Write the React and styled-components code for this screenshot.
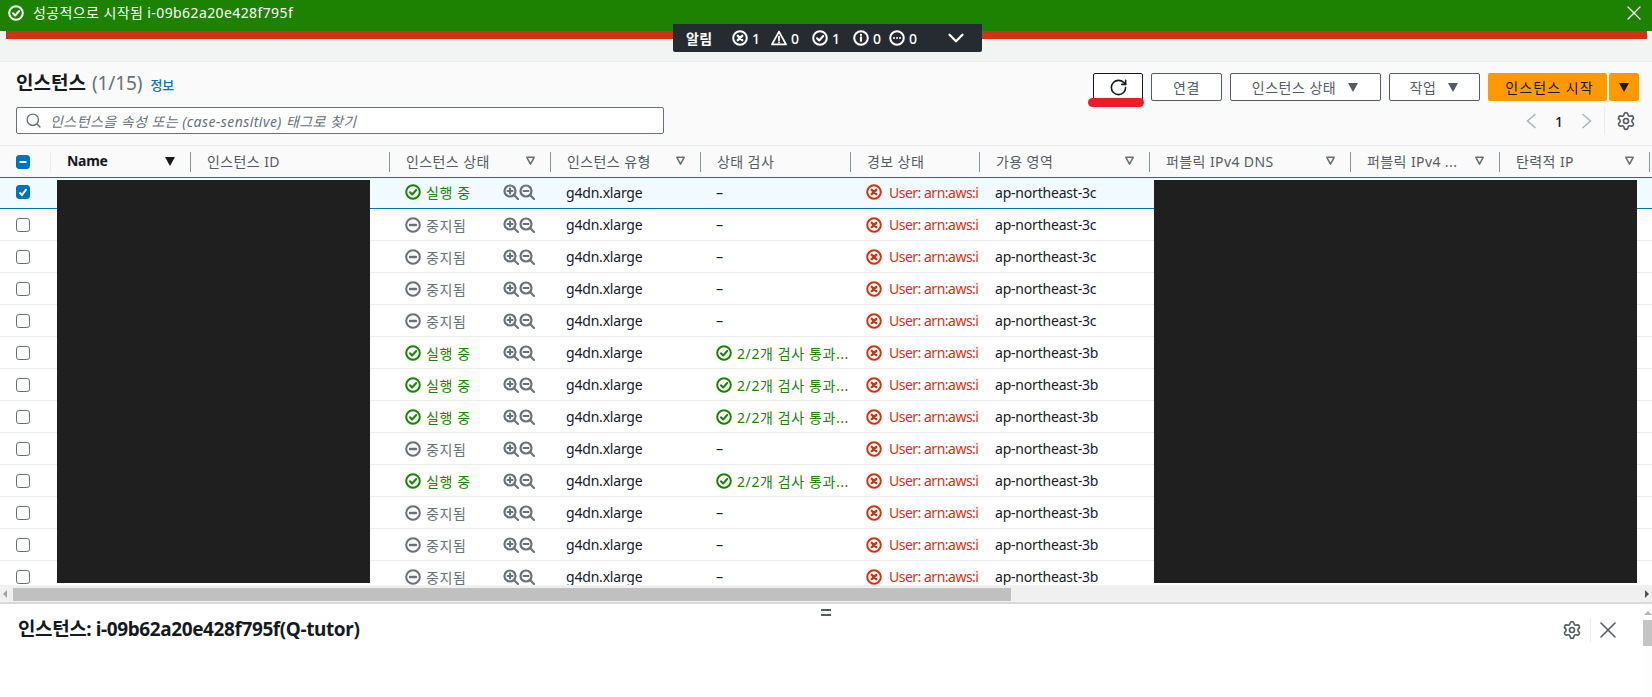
import React from 'react';
import styled, { createGlobalStyle } from 'styled-components';
import { RotateCw, Settings, X, ChevronDown, Search } from 'lucide-react';

const GlobalStyle = createGlobalStyle`
  html, body {
    margin: 0;
    padding: 0;
    height: 697px;
    overflow: hidden;
    background: #f2f3f3;
    font-family: "Noto Sans", "Noto Sans CJK KR", sans-serif;
    font-size: 14px;
    color: #16191f;
  }
`;

const COLUMNS = '50px 140px 199px 161px 150px 150px 129px 170px 201px 149px 150px 3px';

const Page = styled.div`
  position: relative;
  width: 1652px;
  height: 697px;
  overflow: hidden;
  display: flex;
  flex-direction: column;
`;

const FlashGreen = styled.div`
  height: 31px;
  background: #1d8102;
  color: #fff;
  display: flex;
  align-items: center;
  justify-content: space-between;
  padding: 0 6px 5px 8px;
  box-sizing: border-box;
  line-height: 18px;
`;

const FlashText = styled.div`
  display: flex;
  align-items: center;
  gap: 9px;
  letter-spacing: 0.4px;
`;

const FlashRed = styled.div`
  height: 8px;
  margin: 0 5px 0 6px;
  background: #d13212;
`;

const Gap = styled.div`
  height: 22px;
  background: #f2f3f3;
  border-bottom: 1px solid #eaeded;
`;

const NotifyBar = styled.div`
  position: absolute;
  left: 673px;
  top: 24px;
  width: 309px;
  height: 28px;
  background: #262b32;
  border-radius: 0 0 2px 2px;
  color: #fff;
  display: flex;
  align-items: center;
  padding-left: 13px;
  box-sizing: border-box;
  font-size: 14px;
  font-weight: 500;
`;

const NotifyTitle = styled.span`
  font-weight: 700;
  width: 46px;
  letter-spacing: 0.3px;
`;

const NotifyItem = styled.span`
  display: flex;
  align-items: center;
  gap: 4px;
  width: ${(p) => p.$w}px;
`;

const Header = styled.div`
  height: 83px;
  background: #fafafa;
  display: flex;
  justify-content: space-between;
  padding: 8px 13px 0 16px;
  box-sizing: border-box;
`;

const HeaderLeft = styled.div`
  display: flex;
  flex-direction: column;
  gap: 11px;
`;

const TitleLine = styled.div`
  display: flex;
  align-items: baseline;
  height: 26px;
  line-height: 26px;
`;

const Title = styled.h1`
  margin: 0;
  font-size: 19px;
  font-weight: 700;
`;

const Count = styled.span`
  font-size: 19px;
  color: #687078;
  margin-left: 6px;
  letter-spacing: -0.1px;
`;

const InfoLink = styled.a`
  font-size: 13px;
  font-weight: 500;
  color: #0073bb;
  margin-left: 8px;
`;

const SearchBox = styled.div`
  width: 648px;
  height: 27px;
  box-sizing: border-box;
  background: #fff;
  border: 1px solid #687078;
  border-radius: 2px;
  display: flex;
  align-items: center;
  padding-left: 8px;
  gap: 8px;
  color: #687078;
`;

const Placeholder = styled.span`
  font-style: italic;
  font-size: 14px;
  letter-spacing: 0.45px;
`;

const HeaderRight = styled.div`
  display: flex;
  flex-direction: column;
  align-items: flex-end;
  gap: 6px;
  padding-top: 3px;
`;

const Actions = styled.div`
  display: flex;
  gap: 8px;
  height: 28px;
`;

const Button = styled.button`
  height: 28px;
  width: ${(p) => p.$w}px;
  box-sizing: border-box;
  background: #fff;
  border: 1px solid ${(p) => (p.$dark ? '#16191f' : '#545b64')};
  border-radius: 2px;
  padding: 0;
  display: flex;
  align-items: center;
  justify-content: center;
  gap: 11px;
  font: inherit;
  color: #545b64;
  letter-spacing: 0.5px;
`;

const OrangeGroup = styled.div`
  display: flex;
  gap: 2px;
`;

const OrangeButton = styled.button`
  height: 28px;
  width: ${(p) => p.$w}px;
  background: #ff9900;
  border: 0;
  border-radius: 2px;
  padding: ${(p) => (p.$label ? '0 0 0 4px' : '0')};
  display: flex;
  align-items: center;
  justify-content: center;
  font: inherit;
  color: #16191f;
  letter-spacing: 1.1px;
`;

const Pager = styled.div`
  display: flex;
  align-items: center;
  height: 28px;
  padding-right: 3px;
  color: #16191f;
`;

const PageNum = styled.span`
  width: 28px;
  text-align: center;
  font-weight: 500;
  margin: 0 8px;
`;

const PagerDivider = styled.span`
  width: 1px;
  height: 28px;
  background: #eaeded;
  margin: 0 11px 0 12px;
`;

const Table = styled.div`
  position: relative;
  height: 440px;
  overflow: hidden;
  background: #fff;
`;

const HeadRow = styled.div`
  display: grid;
  grid-template-columns: ${COLUMNS};
  height: 32px;
  box-sizing: border-box;
  border-top: 1px solid #eaeded;
  background: #fafafa;
  align-items: center;
  color: #545b64;
`;

const HeadCell = styled.div`
  height: 20px;
  display: flex;
  align-items: center;
  justify-content: space-between;
  box-sizing: border-box;
  padding: 0 14px 2px 16px;
  border-left: 1px solid ${(p) => (p.$soft ? '#eaeded' : '#879596')};
  font-weight: ${(p) => (p.$strong ? 700 : 400)};
  color: ${(p) => (p.$strong ? '#16191f' : '#545b64')};
  white-space: nowrap;
  letter-spacing: ${(p) => (p.$strong ? '-0.3px' : '0.4px')};
`;

const CheckCell = styled.div`
  display: flex;
  align-items: center;
  padding-left: 16px;
`;

const Row = styled.div`
  display: grid;
  grid-template-columns: ${COLUMNS};
  height: 32px;
  box-sizing: border-box;
  align-items: center;
  padding-bottom: ${(p) => (p.$selected ? '2px' : '0')};
  background: ${(p) => (p.$selected ? '#f1faff' : '#fff')};
  border-top: ${(p) => (p.$selected ? '1px solid #0073bb' : '0')};
  border-bottom: 1px solid ${(p) => (p.$selected ? '#0073bb' : '#eaeded')};
`;

const Cell = styled.div`
  display: flex;
  align-items: center;
  gap: 5px;
  padding-left: 16px;
  white-space: nowrap;
  overflow: hidden;
  color: ${(p) => p.$color || '#16191f'};
  letter-spacing: ${(p) => p.$spacing || '-0.2px'};
`;

const AlarmText = styled.span`
  margin-left: 2px;
`;

const StateLabel = styled.span`
  width: 72px;
`;

const ZoomIcons = styled.span`
  display: flex;
`;

const CheckBox = styled.span`
  width: 14px;
  height: 14px;
  box-sizing: border-box;
  border-radius: 3px;
  display: flex;
  align-items: center;
  justify-content: center;
  background: ${(p) => (p.$on ? '#0073bb' : '#fff')};
  border: 1px solid ${(p) => (p.$on ? '#0073bb' : '#687078')};
`;

const Redacted = styled.div`
  position: absolute;
  top: 35px;
  bottom: 2px;
  left: ${(p) => p.$left}px;
  width: ${(p) => p.$width}px;
  background: #1f1f1f;
`;

const ScrollBar = styled.div`
  height: 17px;
  background: #f0f0f0;
  display: flex;
  align-items: center;
  justify-content: space-between;
  position: relative;
`;

const ScrollThumb = styled.div`
  position: absolute;
  left: 13px;
  top: 3px;
  height: 13px;
  width: 998px;
  background: #c0c0c0;
`;

const ScrollArrow = styled.span`
  width: 0;
  height: 0;
  margin: 0 3px;
  border-top: 4px solid transparent;
  border-bottom: 4px solid transparent;
  border-${(p) => (p.$dir === 'left' ? 'right' : 'left')}: 4px solid ${(p) => p.$color};
`;

const Panel = styled.div`
  position: relative;
  flex: 1;
  background: #fff;
  border-top: 2px solid #d5dbdb;
  display: flex;
  justify-content: space-between;
  padding: 11px 30px 0 18px;
`;

const PanelTitle = styled.h2`
  margin: 0;
  font-size: 19px;
  font-weight: 700;
  line-height: 28px;
  letter-spacing: -0.4px;
`;

const PanelTools = styled.div`
  display: flex;
  align-items: center;
  height: 24px;
  margin-top: 3px;
  color: #545b64;
`;

const ToolDivider = styled.span`
  width: 1px;
  height: 24px;
  background: #eaeded;
  margin: 0 3px 0 8px;
`;

const DragHandle = styled.div`
  position: absolute;
  left: 821px;
  top: 5px;
  width: 10px;
  height: 7px;
  border-top: 2px solid #545b64;
  border-bottom: 2px solid #545b64;
  box-sizing: border-box;
`;

const PanelScroll = styled.div`
  position: absolute;
  right: 0;
  top: 0;
  width: 9px;
  bottom: 0;
  background: #fdfdfd;
  display: flex;
  flex-direction: column;
  align-items: center;
`;

const PanelArrow = styled.span`
  width: 0;
  height: 0;
  margin-top: 7px;
  border-left: 4px solid transparent;
  border-right: 4px solid transparent;
  border-bottom: 4px solid #b4b4b4;
`;

const PanelThumb = styled.div`
  align-self: stretch;
  margin-top: 5px;
  height: 26px;
  background: #c4c4c4;
`;

const AnnotationLine = styled.div`
  position: absolute;
  left: 1088px;
  top: 98px;
  width: 56px;
  height: 9px;
  border-radius: 5px;
  background: #ed1c24;
`;

function Caret({ color = '#545b64', size = 12 }) {
  return (
    <svg width={size} height={size} viewBox="0 0 12 12">
      <path d="M1 2h10L6 11z" fill={color} />
    </svg>
  );
}

function FilterCaret() {
  return (
    <svg width="11" height="11" viewBox="0 0 12 12">
      <path d="M2 2.5h8L6 10z" fill="none" stroke="#687078" strokeWidth="1.7" strokeLinejoin="round" />
    </svg>
  );
}

function PageChevron({ flip }) {
  return (
    <svg width="11" height="16" viewBox="0 0 11 16" fill="none" stroke="#aab7b8" strokeWidth="1.6">
      <path d={flip ? 'M1.5 1l8 7-8 7' : 'M9.5 1l-8 7 8 7'} />
    </svg>
  );
}

function CircleIcon({ kind, color, size = 16 }) {
  return (
    <svg width={size} height={size} viewBox="0 0 16 16" fill="none" stroke={color} strokeWidth="2" strokeLinecap="round" strokeLinejoin="round" style={{ flexShrink: 0 }}>
      <circle cx="8" cy="8" r="6.8" />
      {kind === 'check' && <path d="M5 8.2l2.2 2.3 4-4.5" />}
      {kind === 'minus' && <path d="M5 8h6" strokeWidth="2.4" />}
      {kind === 'x' && <path d="M5.8 5.8l4.4 4.4M10.2 5.8l-4.4 4.4" strokeWidth="2.4" />}
      {kind === 'info' && <path d="M8 7.4v3.4M8 4.8v.2" strokeWidth="2.2" />}
      {kind === 'dots' && <path d="M5 8h.01M8 8h.01M11 8h.01" strokeWidth="2" />}
    </svg>
  );
}

function WarnIcon() {
  return (
    <svg width="16" height="16" viewBox="0 0 16 16" fill="none" stroke="#fff" strokeWidth="1.8" strokeLinejoin="round" strokeLinecap="round">
      <path d="M8 1.6L15 14.4H1z" />
      <path d="M8 6.4v4M8 12.3v.1" />
    </svg>
  );
}

function ZoomIcon({ plus }) {
  return (
    <svg width="16" height="16" viewBox="0 0 16 16" fill="none" stroke="#687078" strokeWidth="2.2" strokeLinecap="round">
      <circle cx="7" cy="7" r="5.5" />
      <path d="M11 11l4 4" />
      <path d="M4.6 7h4.8" />
      {plus && <path d="M7 4.6v4.8" />}
    </svg>
  );
}

const headers = [
  { label: '인스턴스 ID' },
  { label: '인스턴스 상태', filter: true },
  { label: '인스턴스 유형', filter: true },
  { label: '상태 검사' },
  { label: '경보 상태' },
  { label: '가용 영역', filter: true },
  { label: '퍼블릭 IPv4 DNS', filter: true },
  { label: '퍼블릭 IPv4 ...', filter: true },
  { label: '탄력적 IP', filter: true },
];

const rows = [
  { running: true, passed: false, zone: 'ap-northeast-3c', selected: true },
  { running: false, passed: false, zone: 'ap-northeast-3c' },
  { running: false, passed: false, zone: 'ap-northeast-3c' },
  { running: false, passed: false, zone: 'ap-northeast-3c' },
  { running: false, passed: false, zone: 'ap-northeast-3c' },
  { running: true, passed: true, zone: 'ap-northeast-3b' },
  { running: true, passed: true, zone: 'ap-northeast-3b' },
  { running: true, passed: true, zone: 'ap-northeast-3b' },
  { running: false, passed: false, zone: 'ap-northeast-3b' },
  { running: true, passed: true, zone: 'ap-northeast-3b' },
  { running: false, passed: false, zone: 'ap-northeast-3b' },
  { running: false, passed: false, zone: 'ap-northeast-3b' },
  { running: false, passed: false, zone: 'ap-northeast-3b' },
];

function InstanceRow({ row }) {
  return (
    <Row $selected={row.selected}>
      <CheckCell>
        <CheckBox $on={row.selected}>
          {row.selected && (
            <svg width="10" height="10" viewBox="0 0 10 10" fill="none" stroke="#fff" strokeWidth="2">
              <path d="M1.5 5.5L4 8l4.5-6" />
            </svg>
          )}
        </CheckBox>
      </CheckCell>
      <Cell />
      <Cell />
      <Cell $spacing="0.6px" $color={row.running ? '#1d8102' : '#687078'}>
        <CircleIcon kind={row.running ? 'check' : 'minus'} color={row.running ? '#1d8102' : '#687078'} />
        <StateLabel>{row.running ? '실행 중' : '중지됨'}</StateLabel>
        <ZoomIcons>
          <ZoomIcon plus />
          <ZoomIcon />
        </ZoomIcons>
      </Cell>
      <Cell>g4dn.xlarge</Cell>
      {row.passed ? (
        <Cell $spacing="0.6px" $color="#1d8102">
          <CircleIcon kind="check" color="#1d8102" />
          2/2개 검사 통과...
        </Cell>
      ) : (
        <Cell>–</Cell>
      )}
      <Cell $spacing="-0.5px" $color="#d13212">
        <CircleIcon kind="x" color="#d13212" />
        <AlarmText>User: arn:aws:i</AlarmText>
      </Cell>
      <Cell>{row.zone}</Cell>
    </Row>
  );
}

export default function App() {
  return (
    <Page>
      <GlobalStyle />
      <FlashGreen>
        <FlashText>
          <CircleIcon kind="check" color="#fff" />
          성공적으로 시작됨 i-09b62a20e428f795f
        </FlashText>
        <X size={24} color="#fff" strokeWidth={1.3} />
      </FlashGreen>
      <FlashRed />
      <Gap />
      <Header>
        <HeaderLeft>
          <TitleLine>
            <Title>인스턴스</Title>
            <Count>(1/15)</Count>
            <InfoLink>정보</InfoLink>
          </TitleLine>
          <SearchBox>
            <Search size={17} strokeWidth={2} />
            <Placeholder>인스턴스을 속성 또는 (case-sensitive) 태그로 찾기</Placeholder>
          </SearchBox>
        </HeaderLeft>
        <HeaderRight>
          <Actions>
            <Button $w={50} $dark>
              <RotateCw size={19} color="#16191f" strokeWidth={2} />
            </Button>
            <Button $w={71}>연결</Button>
            <Button $w={151}>인스턴스 상태 <Caret /></Button>
            <Button $w={91}>작업 <Caret /></Button>
            <OrangeGroup>
              <OrangeButton $w={119} $label>인스턴스 시작</OrangeButton>
              <OrangeButton $w={30}><Caret color="#16191f" /></OrangeButton>
            </OrangeGroup>
          </Actions>
          <Pager>
            <PageChevron />
            <PageNum>1</PageNum>
            <PageChevron flip />
            <PagerDivider />
            <Settings size={20} color="#545b64" strokeWidth={2} />
          </Pager>
        </HeaderRight>
      </Header>
      <Table>
        <HeadRow>
          <CheckCell>
            <CheckBox $on>
              <svg width="10" height="10" viewBox="0 0 10 10" fill="none" stroke="#fff" strokeWidth="2">
                <path d="M1.5 5h7" />
              </svg>
            </CheckBox>
          </CheckCell>
          <HeadCell $soft $strong>
            Name <Caret color="#16191f" />
          </HeadCell>
          {headers.map((h) => (
            <HeadCell key={h.label}>
              {h.label}
              {h.filter && <FilterCaret />}
            </HeadCell>
          ))}
          <HeadCell />
        </HeadRow>
        {rows.map((row, i) => (
          <InstanceRow key={i} row={row} />
        ))}
        <Redacted $left={57} $width={313} />
        <Redacted $left={1154} $width={483} />
      </Table>
      <ScrollBar>
        <ScrollArrow $dir="left" $color="#a3a3a3" />
        <ScrollThumb />
        <ScrollArrow $dir="right" $color="#505050" />
      </ScrollBar>
      <Panel>
        <DragHandle />
        <PanelTitle>인스턴스: i-09b62a20e428f795f(Q-tutor)</PanelTitle>
        <PanelTools>
          <Settings size={20} strokeWidth={2} />
          <ToolDivider />
          <X size={28} strokeWidth={1.3} />
        </PanelTools>
        <PanelScroll>
          <PanelArrow />
          <PanelThumb />
        </PanelScroll>
      </Panel>
      <NotifyBar>
        <NotifyTitle>알림</NotifyTitle>
        <NotifyItem $w={39}><CircleIcon kind="x" color="#fff" />1</NotifyItem>
        <NotifyItem $w={41}><WarnIcon />0</NotifyItem>
        <NotifyItem $w={41}><CircleIcon kind="check" color="#fff" />1</NotifyItem>
        <NotifyItem $w={36}><CircleIcon kind="info" color="#fff" />0</NotifyItem>
        <NotifyItem $w={54}><CircleIcon kind="dots" color="#fff" />0</NotifyItem>
        <ChevronDown size={26} strokeWidth={2} />
      </NotifyBar>
      <AnnotationLine />
    </Page>
  );
}
